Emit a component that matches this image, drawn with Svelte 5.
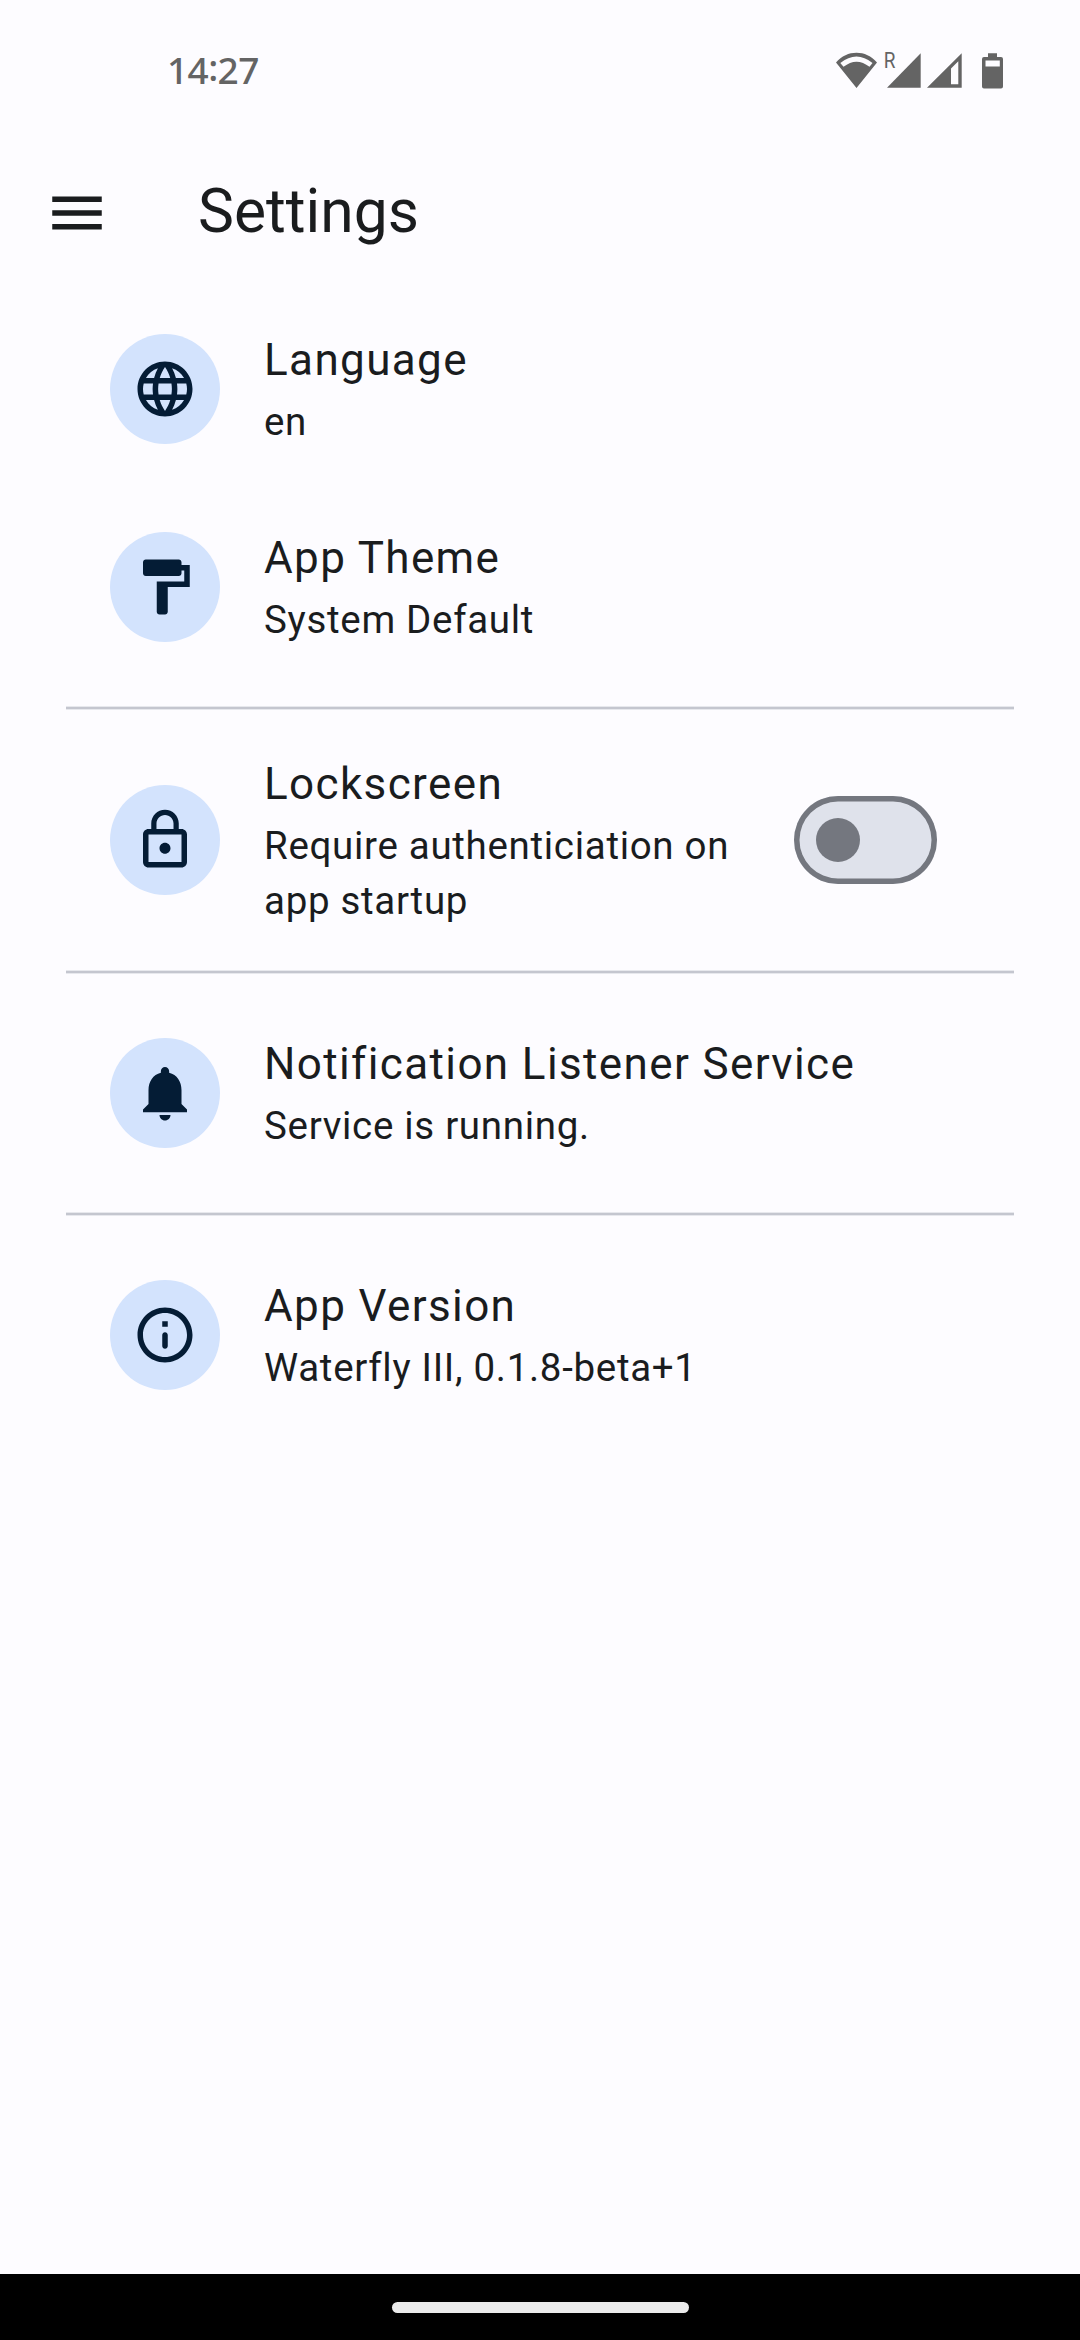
<script>
  let lockscreen = $state(false);

  const icons = {
    language:
      'M11.99 2C6.47 2 2 6.48 2 12s4.47 10 9.99 10C17.52 22 22 17.52 22 12S17.52 2 11.99 2zm6.93 6h-2.95c-.32-1.25-.78-2.45-1.38-3.56 1.84.63 3.37 1.91 4.33 3.56zM12 4.04c.83 1.2 1.48 2.53 1.91 3.96h-3.82c.43-1.43 1.08-2.76 1.91-3.96zM4.26 14C4.1 13.36 4 12.69 4 12s.1-1.36.26-2h3.38c-.08.66-.14 1.32-.14 2s.06 1.34.14 2H4.26zm.82 2h2.95c.32 1.25.78 2.45 1.38 3.56-1.84-.63-3.37-1.9-4.33-3.56zm2.95-8H5.08c.96-1.66 2.49-2.93 4.33-3.56C8.81 5.55 8.35 6.75 8.03 8zM12 19.96c-.83-1.2-1.48-2.53-1.91-3.96h3.82c-.43 1.43-1.08 2.76-1.91 3.96zM14.34 14H9.66c-.09-.66-.16-1.32-.16-2s.07-1.35.16-2h4.68c.09.65.16 1.32.16 2s-.07 1.34-.16 2zm.25 5.56c.6-1.11 1.06-2.31 1.38-3.56h2.95c-.96 1.65-2.49 2.93-4.33 3.56zM16.36 14c.08-.66.14-1.32.14-2s-.06-1.34-.14-2h3.38c.16.64.26 1.31.26 2s-.1 1.36-.26 2h-3.38z',
    paint:
      'M18 4V3c0-.55-.45-1-1-1H5c-.55 0-1 .45-1 1v4c0 .55.45 1 1 1h12c.55 0 1-.45 1-1V6h1v4H9v11c0 .55.45 1 1 1h2c.55 0 1-.45 1-1v-9h8V4h-3z',
    lock:
      'M12 17c1.1 0 2-.9 2-2s-.9-2-2-2-2 .9-2 2 .9 2 2 2zm6-9h-1V6c0-2.76-2.24-5-5-5S7 3.24 7 6v2H6c-1.1 0-2 .9-2 2v10c0 1.1.9 2 2 2h12c1.1 0 2-.9 2-2V10c0-1.1-.9-2-2-2zM8.9 6c0-1.71 1.39-3.1 3.1-3.1s3.1 1.39 3.1 3.1v2H8.9V6zM18 20H6V10h12v10z',
    bell:
      'M12 22c1.1 0 2-.9 2-2h-4c0 1.1.9 2 2 2zm6-6v-5c0-3.07-1.63-5.64-4.5-6.32V4c0-.83-.67-1.5-1.5-1.5s-1.5.67-1.5 1.5v.68C7.64 5.36 6 7.92 6 11v5l-2 2v1h16v-1l-2-2z',
    info:
      'M11 7h2v2h-2zM12 17c.55 0 1-.45 1-1v-4c0-.55-.45-1-1-1s-1 .45-1 1v4c0 .55.45 1 1 1zM12 2C6.48 2 2 6.48 2 12s4.48 10 10 10 10-4.48 10-10S17.52 2 12 2zm0 18c-4.41 0-8-3.59-8-8s3.59-8 8-8 8 3.59 8 8-3.59 8-8 8z'
  };

  const groups = [
    [
      { icon: 'language', title: 'Language', detail: 'en' },
      { icon: 'paint', title: 'App Theme', detail: 'System Default' }
    ],
    [{ icon: 'lock', title: 'Lockscreen', detail: 'Require authenticiation on app startup', toggle: true }],
    [{ icon: 'bell', title: 'Notification Listener Service', detail: 'Service is running.' }],
    [{ icon: 'info', title: 'App Version', detail: 'Waterfly III, 0.1.8-beta+1' }]
  ];
</script>

<div class="screen">
  <header class="status">
    <span class="clock">14<span class="colon">:</span>27</span>
    <svg class="indicators" viewBox="836 46 168 48" aria-hidden="true">
      <path fill-rule="evenodd" d="M836 62.500C847 49.500 866 49.500 877 62.500L856.500 88ZM840.300 63L843.500 66.800Q856.500 56.500 869.500 66.800L872.500 63Q856.500 50 840.300 63Z" />
      <text x="883.800" y="67.700" textLength="11.700" lengthAdjust="spacingAndGlyphs">R</text>
      <path d="M887 87.700L920.700 53.300V87.700Z" />
      <path fill-rule="evenodd" d="M927 87.700L961.700 53.300V87.700ZM951 68.500V84.300H958.300V61.300Z" />
      <path fill-rule="evenodd" d="M988 53.300h9v3.700h4q2 0 2 2v27.500q0 2-2 2h-17q-2 0-2-2V59q0-2 2-2h4zM985.500 60.500v6h14.300v-6z" />
    </svg>
  </header>

  <div class="appbar">
    <svg class="icon" viewBox="0 0 24 24" aria-label="Menu"><path d="M3 18h18v-2H3v2zm0-5h18v-2H3v2zm0-7v2h18V6H3z" /></svg>
    <h1>Settings</h1>
  </div>

  <main>
    {#each groups as group}
      <section>
        {#each group as item}
          <div class="row" class:tall={item.toggle}>
            <div class="avatar">
              <svg class="icon" viewBox="0 0 24 24" aria-hidden="true"><path d={icons[item.icon]} /></svg>
            </div>
            <div class="label">
              <h2>{item.title}</h2>
              <p>{item.detail}</p>
            </div>
            {#if item.toggle}
              <button
                class="switch"
                class:on={lockscreen}
                role="switch"
                aria-checked={lockscreen}
                aria-label={item.title}
                onclick={() => (lockscreen = !lockscreen)}
              ><span class="thumb"></span></button>
            {/if}
          </div>
        {/each}
      </section>
    {/each}
  </main>

  <footer><div class="pill"></div></footer>
</div>

<style>
  :global(body) {
    margin: 0;
    background: #fdfcff;
  }
  .screen {
    box-sizing: border-box;
    width: 1080px;
    height: 2340px;
    display: flex;
    flex-direction: column;
    background: #fdfcff;
    color: #1a1c1e;
    font-family: Roboto, sans-serif;
    overflow: hidden;
  }
  .status {
    flex: none;
    box-sizing: border-box;
    height: 136px;
    padding: 46px 76px 42px 167px;
    display: flex;
    justify-content: space-between;
    color: #646464;
  }
  .clock {
    font: 500 37px/48px 'Noto Sans', sans-serif;
    letter-spacing: -0.6px;
  }
  .colon {
    line-height: 0;
    vertical-align: 3px;
  }
  .indicators {
    width: 168px;
    height: 48px;
    fill: currentColor;
  }
  .indicators text {
    font: 21.5px Roboto, sans-serif;
  }
  .appbar {
    flex: none;
    height: 154px;
    padding-left: 44px;
    display: flex;
    align-items: center;
    gap: 88px;
  }
  .icon {
    flex: none;
    display: block;
    width: 66px;
    height: 66px;
    fill: currentColor;
  }
  h1 {
    margin: 0;
    padding-bottom: 3px;
    font-size: 60.5px;
    line-height: 77px;
    font-weight: 400;
  }
  main {
    flex: 1;
    min-height: 0;
  }
  section + section::before {
    content: '';
    display: block;
    height: 2px;
    margin: 20px 66px;
    border: solid #e7e8ed;
    border-width: 1px 0;
    background: #c4c6cf;
  }
  .row {
    box-sizing: border-box;
    height: 198px;
    padding: 0 143px 0 110px;
    display: flex;
    align-items: center;
    gap: 44px;
  }
  .row.tall {
    height: 220px;
  }
  .avatar {
    flex: none;
    width: 110px;
    height: 110px;
    border-radius: 50%;
    display: grid;
    place-items: center;
    background: #d3e3fd;
    color: #041c35;
  }
  .label {
    flex: 1;
    padding-bottom: 1px;
  }
  .tall .label {
    padding-bottom: 0;
  }
  h2,
  p {
    margin: 0;
    font-weight: 400;
  }
  h2 {
    padding-bottom: 2px;
    font-size: 44px;
    line-height: 64px;
    letter-spacing: 1.375px;
  }
  p {
    font-size: 38.5px;
    line-height: 55px;
    letter-spacing: 0.6875px;
  }
  .switch {
    flex: none;
    box-sizing: border-box;
    width: 143px;
    height: 88px;
    padding: 0 22px;
    border: 0;
    border-radius: 44px;
    box-shadow: inset 0 0 0 5.5px #74777f;
    display: flex;
    align-items: center;
    background: #dfe2eb;
  }
  .switch.on {
    justify-content: flex-end;
  }
  .thumb {
    width: 44px;
    height: 44px;
    border-radius: 50%;
    background: #74777f;
  }
  footer {
    flex: none;
    height: 66px;
    display: grid;
    place-items: center;
    background: #000;
  }
  .pill {
    width: 297px;
    height: 11px;
    border-radius: 6px;
    background: #ebebeb;
  }
</style>
